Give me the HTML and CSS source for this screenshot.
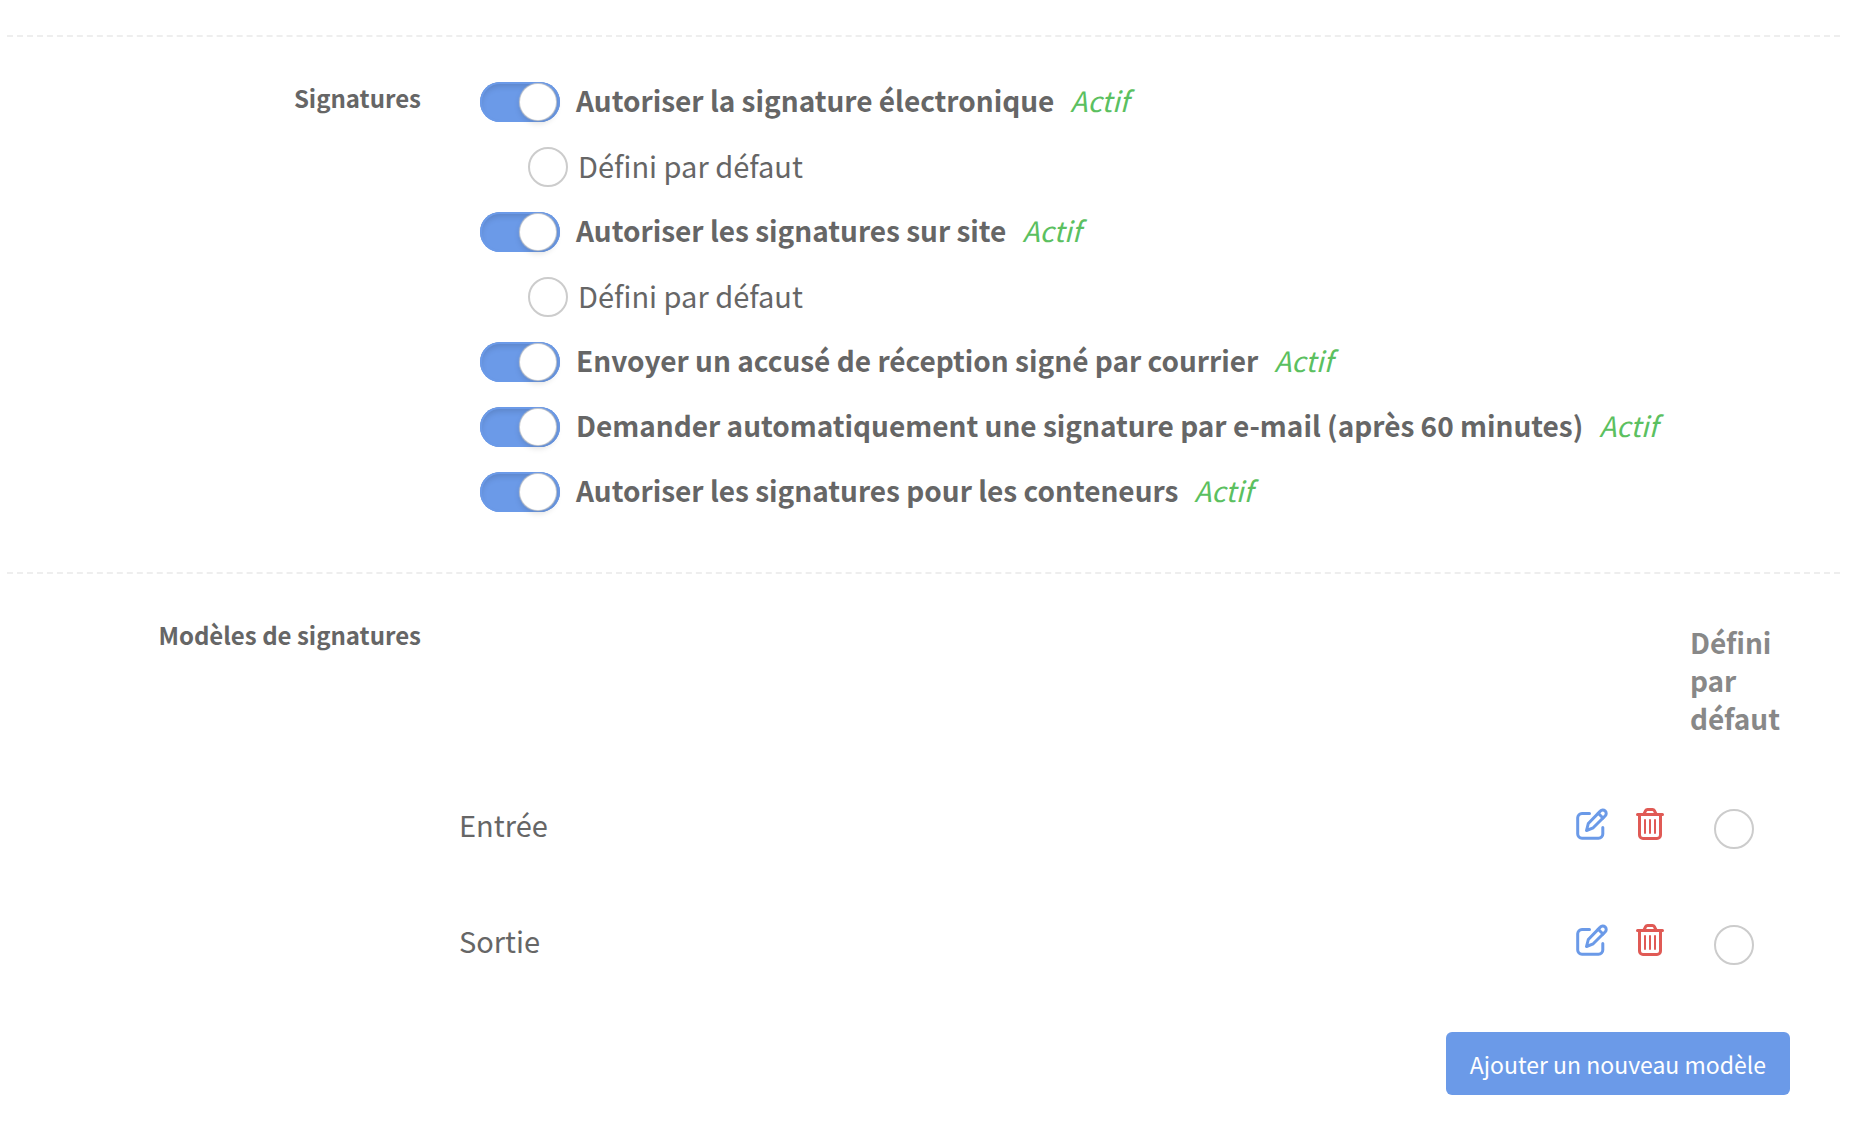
FILE: index.html
```html
<!DOCTYPE html>
<html lang="fr">
<head>
    <meta charset="UTF-8">
    <meta name="viewport" content="width=device-width, initial-scale=1.0">
    <title>Signatures</title>
    <link rel="stylesheet" href="styles.css">
</head>
<body>

<!-- Shared icons -->
<svg class="sprite" aria-hidden="true">
    <symbol id="icon-edit" viewBox="0 0 32 32">
        <path d="M13.5 5.500H6A4.300 4.300 0 0 0 1.700 9.800V26A4.300 4.300 0 0 0 6 30.300H22.500A4.300 4.300 0 0 0 26.800 26V19.500" />
        <path d="M10.500 22.500L12.300 15.500L24.300 3.100A3.300 3.300 0 0 1 29.300 7.700L17.200 19.800Z" />
        <path d="M22.200 5.300L27 10" />
    </symbol>
    <symbol id="icon-trash" viewBox="0 0 28 32">
        <path d="M1.500 6.500H26.500" />
        <path d="M3.500 7V27A3.500 3.500 0 0 0 7 30.500H21A3.500 3.500 0 0 0 24.500 27V7" />
        <path d="M8 6L9.500 2.800Q10.200 1.500 11.500 1.500H16.500Q17.800 1.500 18.500 2.800L20 6" />
        <path class="thin" d="M9 12V25M14 12V25M19 12V25" />
    </symbol>
</svg>

<form>
    <section class="group">
        <h2 class="group-label">Signatures</h2>
        <div class="options">
            <div class="option">
                <input type="checkbox" id="electronic" class="switch" checked>
                <label for="electronic">Autoriser la signature électronique</label>
                <em class="state">Actif</em>
            </div>
            <div class="option option-default">
                <input type="radio" id="electronicDefault" name="signatureDefault" class="radio">
                <label for="electronicDefault">Défini par défaut</label>
            </div>
            <div class="option">
                <input type="checkbox" id="onSite" class="switch" checked>
                <label for="onSite">Autoriser les signatures sur site</label>
                <em class="state">Actif</em>
            </div>
            <div class="option option-default">
                <input type="radio" id="onSiteDefault" name="signatureDefault" class="radio">
                <label for="onSiteDefault">Défini par défaut</label>
            </div>
            <div class="option">
                <input type="checkbox" id="receipt" class="switch" checked>
                <label for="receipt">Envoyer un accusé de réception signé par courrier</label>
                <em class="state">Actif</em>
            </div>
            <div class="option">
                <input type="checkbox" id="autoRequest" class="switch" checked>
                <label for="autoRequest">Demander automatiquement une signature par e-mail (après 60 minutes)</label>
                <em class="state">Actif</em>
            </div>
            <div class="option">
                <input type="checkbox" id="containers" class="switch" checked>
                <label for="containers">Autoriser les signatures pour les conteneurs</label>
                <em class="state">Actif</em>
            </div>
        </div>
    </section>

    <section class="group">
        <h2 class="group-label">Modèles de signatures</h2>
        <div class="templates">
            <table class="template-table">
                <thead>
                    <tr>
                        <td></td>
                        <td></td>
                        <th scope="col" class="col-default">Défini par défaut</th>
                    </tr>
                </thead>
                <tbody>
                    <tr>
                        <td>Entrée</td>
                        <td class="col-actions">
                            <div class="actions">
                                <button type="button" class="icon-button edit" aria-label="Modifier Entrée"><svg width="32" height="32"><use href="#icon-edit" /></svg></button>
                                <button type="button" class="icon-button trash" aria-label="Supprimer Entrée"><svg width="28" height="32"><use href="#icon-trash" /></svg></button>
                            </div>
                        </td>
                        <td class="col-default"><input type="radio" name="templateDefault" class="radio" aria-label="Entrée, défini par défaut"></td>
                    </tr>
                    <tr>
                        <td>Sortie</td>
                        <td class="col-actions">
                            <div class="actions">
                                <button type="button" class="icon-button edit" aria-label="Modifier Sortie"><svg width="32" height="32"><use href="#icon-edit" /></svg></button>
                                <button type="button" class="icon-button trash" aria-label="Supprimer Sortie"><svg width="28" height="32"><use href="#icon-trash" /></svg></button>
                            </div>
                        </td>
                        <td class="col-default"><input type="radio" name="templateDefault" class="radio" aria-label="Sortie, défini par défaut"></td>
                    </tr>
                </tbody>
            </table>
            <button type="button" class="add-button">Ajouter un nouveau modèle</button>
        </div>
    </section>
</form>

</body>
</html>
```

FILE: styles.css
```css
body {
    margin: 0;
    padding: 35px 10px 0 7px;
    background-color: #fff;
    color: #666;
    font-family: "Noto Sans CJK SC", "Noto Sans", sans-serif;
    font-size: 28px;
    line-height: 36px;
}

.sprite {
    display: none;
}

.group {
    display: grid;
    grid-template-columns: 414px 1fr;
    border-top: 2px dashed #eee;
    padding-top: 45px;
    padding-bottom: 60px;
}

.group-label {
    margin: 0;
    font-size: 24px;
    line-height: 32px;
    font-weight: bold;
    text-align: right;
}

/* Switch and radio rows */
.options {
    display: flex;
    flex-direction: column;
    gap: 25px;
    padding-left: 59px;
}

.option {
    display: flex;
    align-items: flex-start;
    gap: 16px;
    font-weight: bold;
}

.option-default {
    gap: 10px;
    padding-left: 48px;
    font-size: 29px;
    font-weight: normal;
}

.state {
    color: #5bc060;
    font-weight: normal;
}

.switch {
    appearance: none;
    display: flex;
    flex-shrink: 0;
    justify-content: flex-start;
    box-sizing: border-box;
    width: 80px;
    height: 40px;
    margin: 0;
    padding: 2px 4px;
    border-radius: 20px;
    background-color: #ccc;
    cursor: pointer;
}

.switch::before {
    content: "";
    width: 36px;
    height: 36px;
    border-radius: 50%;
    background-color: #fff;
    box-shadow: 0 0 1px 1px #ccc, 0 3px 6px rgba(0, 0, 0, 0.15);
}

.switch:checked {
    justify-content: flex-end;
    background-color: #6b9ae8;
    box-shadow: inset 0 0 0 2px #6b9ae8, inset 0 4px 6px rgba(0, 0, 0, 0.15);
}

.radio {
    appearance: none;
    flex-shrink: 0;
    box-sizing: border-box;
    width: 40px;
    height: 40px;
    margin: 0;
    border: 2px solid #ccc;
    border-radius: 50%;
    background-color: #fff;
    cursor: pointer;
}

.radio:checked {
    border: 12px solid #6b9ae8;
}

/* Signature templates */
.templates {
    display: flex;
    flex-direction: column;
    align-items: flex-end;
    padding-left: 22px;
    padding-right: 50px;
}

.template-table {
    width: 100%;
    border-collapse: collapse;
}

.template-table td,
.template-table th {
    box-sizing: border-box;
    padding: 0 10px 0 16px;
    text-align: left;
}

.template-table th {
    padding-top: 4px;
    padding-bottom: 29px;
    color: #888;
    line-height: 38px;
}

.template-table tbody td {
    height: 116px;
    font-size: 29px;
}

.template-table .col-actions {
    width: 114px;
}

.template-table .col-default {
    width: 114px;
}

.template-table .radio {
    display: block;
    margin-top: 10px;
    margin-left: 24px;
}

.actions {
    display: flex;
    gap: 28px;
}

.icon-button {
    display: flex;
    padding: 0;
    border: 0;
    background: none;
    cursor: pointer;
}

.icon-button svg {
    fill: none;
    stroke: currentColor;
    stroke-width: 3;
    stroke-linecap: round;
    stroke-linejoin: round;
}

.thin {
    stroke-width: 2;
}

.edit {
    color: #6b9ae8;
}

.trash {
    color: #e05a55;
}

.add-button {
    margin-top: 34px;
    padding: 14px 24px 13px;
    border: 0;
    border-radius: 6px;
    background-color: #6b9ae8;
    color: #fff;
    font-family: inherit;
    font-size: 23px;
    line-height: 36px;
    cursor: pointer;
}
```
